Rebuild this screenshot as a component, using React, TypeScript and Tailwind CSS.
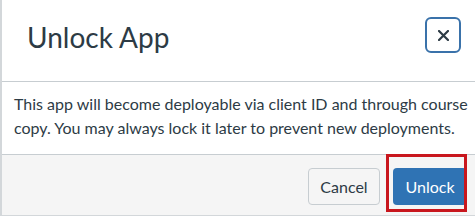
import React from "react";

export default function App() {
  return (
    <div className="relative w-[475px] h-[218px] overflow-hidden bg-white" style={{ fontFamily: "Lato, 'Liberation Sans', sans-serif" }}>
      <div className="w-[490px] h-[216px] border-l-2 border-b border-[#d3d7da] bg-white flex flex-col">
        <div className="h-[82px] shrink-0 border-b border-[#c7cdd1] flex justify-between pl-[25px] pr-[29px]">
          <h1 className="pt-[19px] text-[28px] leading-[36px] text-[#2d3b45] font-normal">Unlock App</h1>
          <div className="pt-[17px]">
            <button className="w-[36px] h-[36px] rounded-[6px] border-2 border-[#3a72aa] flex items-center justify-center">
              <svg width="11" height="11" viewBox="0 0 11 11">
                <path d="M1 1L10 10M10 1L1 10" stroke="#2d3b45" strokeWidth="2.2" strokeLinecap="round" />
              </svg>
            </button>
          </div>
        </div>
        <div className="h-[72px] shrink-0 pl-[12px] pt-[10px] text-[16px] leading-[24px] text-[#2d3b45]">
          <p>This app will become deployable via client ID and through course<br />copy. You may always lock it later to prevent new deployments.</p>
        </div>
        <div className="flex-1 border-t border-[#c7cdd1] bg-[#f5f5f5] flex items-start pt-[13px] pl-[306px] gap-[13px]">
          <button className="h-[37px] w-[72px] rounded-[4px] border border-[#c7cdd1] bg-[#f5f5f5] text-[16px] text-[#2d3b45]">Cancel</button>
          <button className="h-[37px] w-[74px] rounded-[4px] bg-[#2f73b4] text-[16px] text-white">Unlock</button>
        </div>
      </div>
      <div className="absolute left-[386px] top-[154px] w-[81px] h-[58px] border-[3px] border-[#c8161d]" />
    </div>
  );
}
